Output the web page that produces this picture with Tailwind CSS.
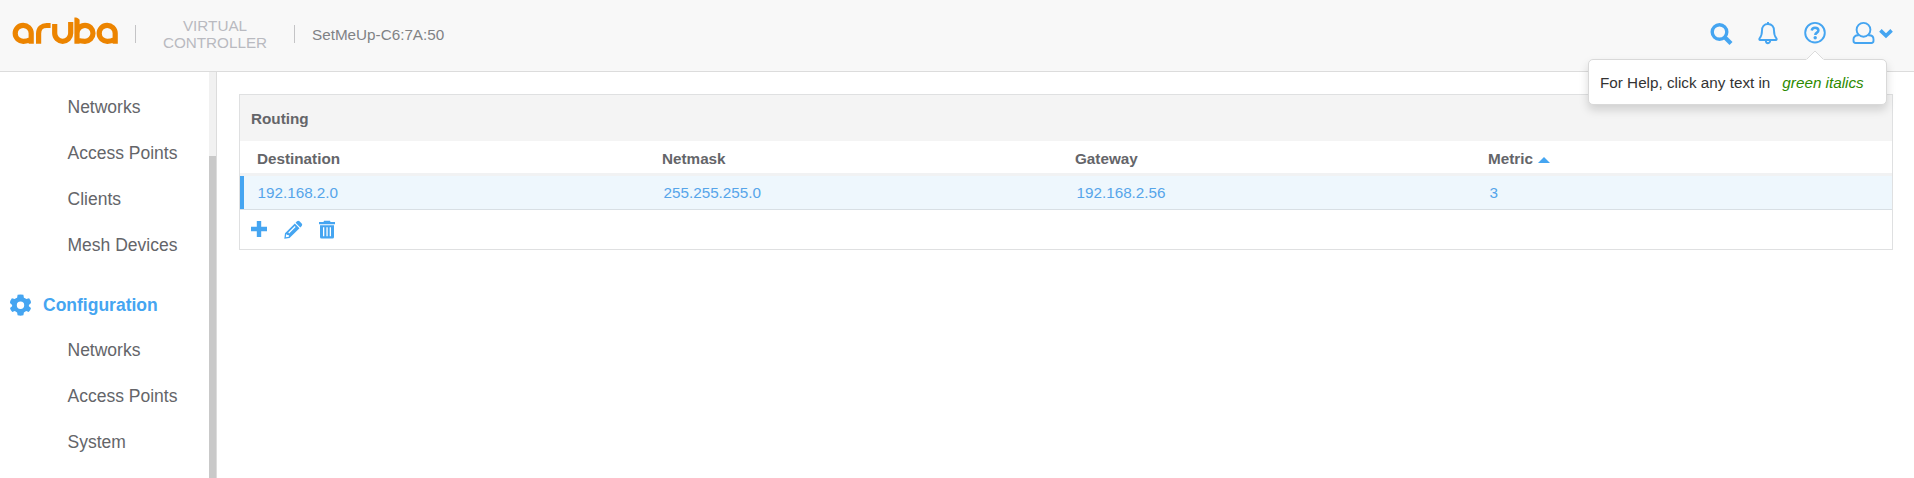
<!DOCTYPE html>
<html lang="en">
<head>
<meta charset="utf-8">
<title>Aruba Virtual Controller</title>
<script src="https://cdn.jsdelivr.net/npm/@tailwindcss/browser@4"></script>
</head>
<body class="flex h-screen flex-col overflow-hidden bg-white font-['Liberation_Sans',Arial,sans-serif] text-[15.25px] text-[#646569]">
<header class="relative flex h-[72px] shrink-0 items-start border-b border-[#dcdcdc] bg-[#f8f8f8]">
  <svg class="ml-3 mt-4 h-[30px] w-[108px] shrink-0" viewBox="12 16 108 30" fill="none" stroke="#ec8400" stroke-width="5.2" aria-label="aruba">
    <path d="M31.200 43.800V33.300a8 8 0 1 0-7.700 8c2.200 0 4.500-.4 6.500-1.500"/>
    <path d="M38.600 43.800V33.500c0-5 3.500-8 8-8h4"/>
    <path d="M54.700 24v9.300a8 8 0 0 0 16 0V22"/>
    <path d="M77 43.800V17.500M77 33.300a8 8 0 1 1 8 8c-3 0-5.500-.5-8-1"/>
    <path d="M74.200 15.500l6 4.500v-5z" fill="#f8f8f8" stroke="none"/>
    <path d="M115.200 43.800V33.300a8 8 0 1 0-7.700 8c2.200 0 4.500-.4 6.500-1.500"/>
  </svg>
  <div class="ml-[15px] mt-[25px] h-[18px] w-px bg-[#c4c4c6]"></div>
  <div class="ml-[25px] mt-[17px] w-[108px] text-center leading-[17px] text-[#b9bac0]">VIRTUAL CONTROLLER</div>
  <div class="ml-[25px] mt-[25px] h-[18px] w-px bg-[#c4c4c6]"></div>
  <div class="ml-[17px] mt-[26px] leading-[17px] text-[#808285]">SetMeUp-C6:7A:50</div>
  <div class="ml-auto mr-[21px] mt-[21px] flex h-6 items-start text-[#45a5f1]">
    <svg class="mr-[25px] mt-[1px] h-[24px] w-[23px]" viewBox="0 0 23 24" fill="none" stroke="currentColor"><circle cx="9.500" cy="10" r="7.300" stroke-width="3.400"/><path d="M15 15.500l6 6" stroke-width="4.200"/></svg>
    <svg class="mr-[26px] h-[24px] w-5" viewBox="0 0 20 24" fill="none" stroke="currentColor" stroke-width="1.900"><path d="M10 1v2.500M10 3c-4 0-6 3-6 6.500 0 4.500-.8 6-2.400 7.800-.6.900-.3 1.700.5 1.700h15.800c.8 0 1.100-.8.500-1.700-1.600-1.800-2.400-3.300-2.400-7.800C16 6 14 3 10 3z"/><path d="M7.800 19.500a2.200 2.700 0 0 0 4.400 0" /></svg>
    <svg class="mr-[26px] h-[24px] w-[22px]" viewBox="0 0 22 24" fill="none" stroke="currentColor"><circle cx="11" cy="11.700" r="9.800" stroke-width="1.900"/><path d="M7.700 9.500c.3-2 1.600-2.800 3.300-2.800 1.900 0 3.400 1 3.400 2.800 0 2.200-3.100 2.100-3.100 4.500" stroke-width="2.500"/><circle cx="11.200" cy="16.700" r="1.700" fill="currentColor" stroke="none"/></svg>
    <svg class="mr-[4px] h-[24px] w-[23px]" viewBox="0 0 23 24" fill="none" stroke="currentColor" stroke-width="1.900"><circle cx="11.500" cy="8.800" r="6.900"/><path d="M6.800 14.300H6c-2.800 0-4.500 1.700-4.500 4v1.500c0 1.400.8 2.200 2.200 2.200h15.600c1.400 0 2.200-.8 2.200-2.200v-1.500c0-2.300-1.700-4-4.500-4h-.8"/></svg>
    <svg class="mt-[7px] h-[11px] w-[14px]" viewBox="0 0 14 11" fill="none" stroke="currentColor" stroke-width="3.600"><path d="M1.400 2.400L7 7.800l5.600-5.400"/></svg>
  </div>
  <div class="absolute left-[1588px] top-[59px] z-10 flex h-[46px] w-[299px] items-center rounded-[5px] border border-[#d9d9d9] bg-white pl-[11px] pt-px leading-[18px] text-[#333] shadow-[0_5px_10px_rgba(0,0,0,0.15)]">
    <svg class="absolute left-[217px] top-[-10px] h-[11px] w-[18px]" viewBox="0 0 18 11"><path d="M0 10L9 1l9 9v1H0z" fill="#fff"/><path d="M1 9L9 1l8 8" fill="none" stroke="#dcdcdc"/></svg>
    <span>For Help, click any text in</span><span class="ml-3 italic text-[#2d8a00]">green italics</span>
  </div>
</header>
<div class="flex min-h-0 flex-1">
  <aside class="flex w-[217px] shrink-0 border-r border-[#dcdcdc]">
    <nav class="flex-1 pt-[12px] text-[17.500px]">
      <a class="flex h-[46px] items-center pl-[67.5px]">Networks</a>
      <a class="flex h-[46px] items-center pl-[67.5px]">Access Points</a>
      <a class="flex h-[46px] items-center pl-[67.5px]">Clients</a>
      <a class="flex h-[46px] items-center pl-[67.5px]">Mesh Devices</a>
      <a class="mt-[14px] flex h-[46px] items-center pl-[10px] font-bold text-[#45a5f1]">
        <svg class="mr-[12px] h-[22px] w-[21px]" viewBox="0 0 21 22" fill="currentColor" fill-rule="evenodd"><path d="M7.600.8Q10.500 0 13.400.8L13.900 3.700Q15.200 4.200 16.300 5.100L19.100 4.200Q21 6.500 21 9L18.900 10.900V12.200L21 14Q20.500 16.500 18.700 18L16.200 17Q15 18 13.900 18.400L13.400 21.300Q10.500 22 7.600 21.300L7.100 18.400Q6 18 4.800 17L2.300 18Q.5 16.500 0 14L2.100 12.200V10.900L0 9Q0 6.500 1.900 4.200L4.700 5.100Q5.800 4.200 7.100 3.700zM10.500 7.600a3.700 3.700 0 1 0 0 7.400 3.700 3.700 0 1 0 0-7.400z"/></svg>
        <span>Configuration</span>
      </a>
      <a class="flex h-[46px] items-center pl-[67.5px] -mt-px">Networks</a>
      <a class="flex h-[46px] items-center pl-[67.5px]">Access Points</a>
      <a class="flex h-[46px] items-center pl-[67.5px]">System</a>
    </nav>
    <div class="w-[7px] bg-[#f1f1f1] pt-[84px]"><div class="h-full bg-[#c9c9c9]"></div></div>
  </aside>
  <main class="flex-1 pl-[22px] pr-[21px] pt-[22px]">
    <section class="border border-[#dfe0e1]">
      <h2 class="flex h-[46px] items-center bg-[#f4f4f4] pl-[11px] pt-[3px] font-bold">Routing</h2>
      <div class="grid h-[35px] grid-cols-4 items-center border-b-[3px] border-[#f1f2f3] pt-[4px] font-bold">
        <div class="pl-[17px]">Destination</div><div class="pl-[9px]">Netmask</div><div class="pl-[9px]">Gateway</div>
        <div class="flex items-center gap-[5px] pl-[9px]">Metric<svg class="mt-px h-[6px] w-3" viewBox="0 0 12 6"><path d="M0 6L6 0l6 6z" fill="#45a5f1"/></svg></div>
      </div>
      <div class="grid h-[34px] grid-cols-4 items-center border-b border-[#d8dfe4] bg-[#eef7fd] leading-[18px] text-[#56a5ea]">
        <div class="flex h-full items-center border-l-4 border-[#45a5f1] pl-[13.500px] pt-px">192.168.2.0</div><div class="pl-[10.500px] pt-px">255.255.255.0</div><div class="pl-[10.500px] pt-px">192.168.2.56</div><div class="pl-[10.500px] pt-px">3</div>
      </div>
      <div class="flex h-[39px] items-center pl-[11px] text-[#45a5f1]">
        <svg class="-mt-px h-4 w-4" viewBox="0 0 16 16" fill="none" stroke="currentColor" stroke-width="4.400"><path d="M8 0v16M0 8h16"/></svg>
        <svg class="-mt-px ml-[17px] h-[19px] w-[19px]" viewBox="0 0 19 19" fill="currentColor" fill-rule="evenodd"><path d="M13 1.300Q14.200.2 15.500 1.300L17.700 3.500Q18.800 4.700 17.700 6L16.300 7.400 11.600 2.700zM10.800 3.500L15.500 8.200 5.500 18 .3 18.700 1 13.300zM10.800 6.100L4.300 12.600l.8.800 6.500-6.500zM2.300 14l-.5 3.200 3.100-.5-.2-1.600-1.400-.1z"/></svg>
        <svg class="-mt-px ml-[16px] h-[19px] w-4" viewBox="0 0 16 19" fill="currentColor" fill-rule="evenodd"><path d="M5 .7h6L11.500 2H16v2.300H0V2h4.500zM1 5.300h14V17q0 1.500-1.500 1.500h-11Q1 18.500 1 17zM4 7.300v9h1.300v-9zM7.400 7.300v9h1.300v-9zM10.700 7.300v9H12v-9z"/></svg>
      </div>
    </section>
  </main>
</div>
</body>
</html>
